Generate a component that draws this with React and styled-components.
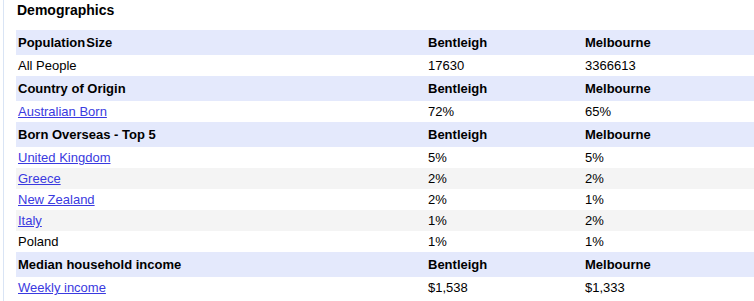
import React from "react";
import styled, { createGlobalStyle } from "styled-components";

const GlobalStyle = createGlobalStyle`
  body {
    margin: 0;
    background: #fff;
    overflow: hidden;
    font-family: "Liberation Sans", Arial, sans-serif;
    font-size: 13px;
    color: #000;
  }
`;

const Panel = styled.div`
  margin-left: 3px;
  padding-left: 12px;
  border-left: 1px solid #d9e4f5;
  min-height: 301px;
`;

const Title = styled.h3`
  margin: 0;
  padding: 2px 0 0 1px;
  height: 30px;
  box-sizing: border-box;
  font-size: 14px;
  font-weight: bold;
`;

const Table = styled.table`
  border-collapse: collapse;
  table-layout: fixed;
  width: 738px;
`;

const Row = styled.tr`
  background: ${(p) => (p.$head ? "#e4e9fc" : p.$shade ? "#f4f4f4" : "#fff")};
  height: ${(p) => (p.$head ? "25px" : "21px")};
  font-weight: ${(p) => (p.$head ? "bold" : "normal")};
`;

const Cell = styled.td`
  padding: 0 2px;
  vertical-align: middle;
  white-space: nowrap;
`;

const Link = styled.a`
  color: #3a3ae0;
  text-decoration: underline;
`;

const sections = [
  {
    title: "Population\u200ASize",
    rows: [{ label: "All People", a: "17630", b: "3366613" }],
  },
  {
    title: "Country of Origin",
    rows: [{ label: "Australian Born", a: "72%", b: "65%", link: true }],
  },
  {
    title: "Born Overseas - Top 5",
    rows: [
      { label: "United Kingdom", a: "5%", b: "5%", link: true },
      { label: "Greece", a: "2%", b: "2%", link: true },
      { label: "New Zealand", a: "2%", b: "1%", link: true },
      { label: "Italy", a: "1%", b: "2%", link: true },
      { label: "Poland", a: "1%", b: "1%" },
    ],
  },
  {
    title: "Median household income",
    rows: [{ label: "Weekly income", a: "$1,538", b: "$1,333", link: true }],
  },
];

export default function App() {
  return (
    <>
      <GlobalStyle />
      <Panel>
        <Title>Demographics</Title>
        <Table>
          <colgroup>
            <col style={{ width: 410 }} />
            <col style={{ width: 157 }} />
            <col />
          </colgroup>
          <tbody>
            {sections.map((s) => (
              <React.Fragment key={s.title}>
                <Row $head>
                  <Cell>{s.title}</Cell>
                  <Cell>Bentleigh</Cell>
                  <Cell>Melbourne</Cell>
                </Row>
                {s.rows.map((r, i) => (
                  <Row key={r.label} $shade={i % 2 === 1}>
                    <Cell>{r.link ? <Link href="#">{r.label}</Link> : r.label}</Cell>
                    <Cell>{r.a}</Cell>
                    <Cell>{r.b}</Cell>
                  </Row>
                ))}
              </React.Fragment>
            ))}
          </tbody>
        </Table>
      </Panel>
    </>
  );
}
